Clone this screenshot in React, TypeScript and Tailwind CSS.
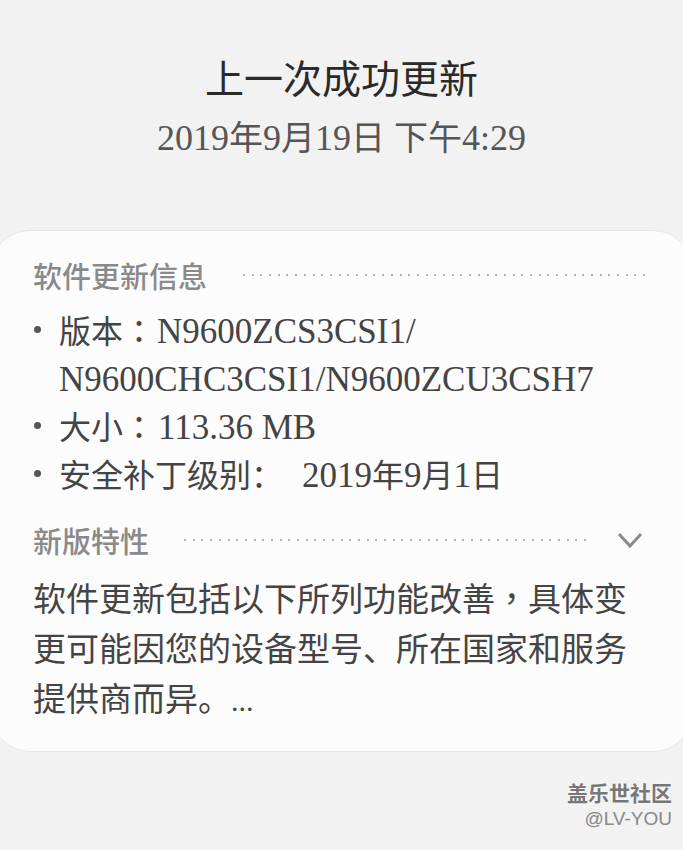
import React from "react";

const L = ({ children, className = "" }: { children: React.ReactNode; className?: string }) => (
  <span className={"font-['Liberation_Serif',serif] leading-none " + className}>{children}</span>
);

const Dots = () => (
  <div className="flex-1 h-[2px] bg-[repeating-linear-gradient(to_right,#b3b3b3_0_2px,transparent_2px_8.7px)]" />
);

const Bullet = () => (
  <div className="w-[26px] shrink-0 flex items-center h-[48px]">
    <div className="ml-[1px] w-[7px] h-[7px] rounded-full bg-[#555]" />
  </div>
);

export default function App() {
  return (
    <div className="min-h-[850px] w-full overflow-hidden bg-[#f2f2f2] font-['Noto_Sans_CJK_SC',sans-serif]">
      <div className="pt-[52px] flex flex-col items-center">
        <div className="text-[39px] leading-[48px] text-[#2a2a2a]">上一次成功更新</div>
        <div className="mt-[14px] text-[34px] leading-[44px] text-[#555]">
          <L className="text-[36px]">2019</L>年<L className="text-[36px]">9</L>月<L className="text-[36px]">19</L>日<L className="text-[36px]"> </L>下午<L className="text-[36px]">4:29</L>
        </div>
      </div>

      <div className="mt-[72px] -mx-[10px] rounded-[40px] border border-[#e6e6e6] bg-[#fcfcfc] px-[42px] pt-6 pb-[29px]">
        <div className="flex items-center h-[40px]">
          <div className="text-[29px] leading-[40px] text-[#8a8a8a] font-medium">软件更新信息</div>
          <div className="ml-[36px] flex-1 flex items-center"><Dots /></div>
        </div>

        <div className="mt-[10px] text-[32px] leading-[48px] text-[#444]">
          <div className="flex">
            <Bullet />
            <div>
              <div className="h-[48px]">
                版本<span className="font-['Noto_Sans_CJK_TC',sans-serif]">：</span><L className="text-[35px] ml-[2px]">N9600ZCS3CSI1/</L>
              </div>
              <div className="h-[48px]">
                <L className="text-[35px]">N9600CHC3CSI1/N9600ZCU3CSH7</L>
              </div>
            </div>
          </div>
          <div className="flex h-[48px]">
            <Bullet />
            <div>
              大小<span className="font-['Noto_Sans_CJK_TC',sans-serif]">：</span><L className="text-[35px] ml-[3px]">113.36 MB</L>
            </div>
          </div>
          <div className="flex h-[47px]">
            <Bullet />
            <div>
              安全补丁级别：<L className="text-[35px] ml-[19px]">2019</L>年<L className="text-[35px]">9</L>月<L className="text-[35px]">1</L>日
            </div>
          </div>
        </div>

        <div className="mt-6 flex items-center h-[40px]">
          <div className="text-[29px] leading-[40px] text-[#8a8a8a] font-medium">新版特性</div>
          <div className="ml-[35px] flex-1 flex items-center"><Dots /></div>
          <svg className="ml-[28px] mr-[7px]" width="26" height="18" viewBox="0 0 26 18" fill="none">
            <polyline points="2,3 13,15 24,3" stroke="#8a8a8a" strokeWidth="3" strokeLinecap="butt" strokeLinejoin="miter" />
          </svg>
        </div>

        <div className="mt-3 text-[33px] leading-[50px] text-[#444]">
          软件更新包括以下所列功能改善<span className="font-['Noto_Sans_CJK_TC',sans-serif]">，</span>具体变更可能因您的设备型号、所在国家和服务提供商而异。<L className="text-[30px]">...</L>
        </div>
      </div>

      <div className="mt-[27px] pr-[11px] flex flex-col items-end">
        <div className="text-[21px] leading-[26px] font-bold text-[#777] [text-shadow:0_0_2px_#fff]">盖乐世社区</div>
        <div className="mt-[2px] text-[19px] leading-[24px] text-[#888] font-['Liberation_Sans',sans-serif]">@LV-YOU</div>
      </div>
    </div>
  );
}
